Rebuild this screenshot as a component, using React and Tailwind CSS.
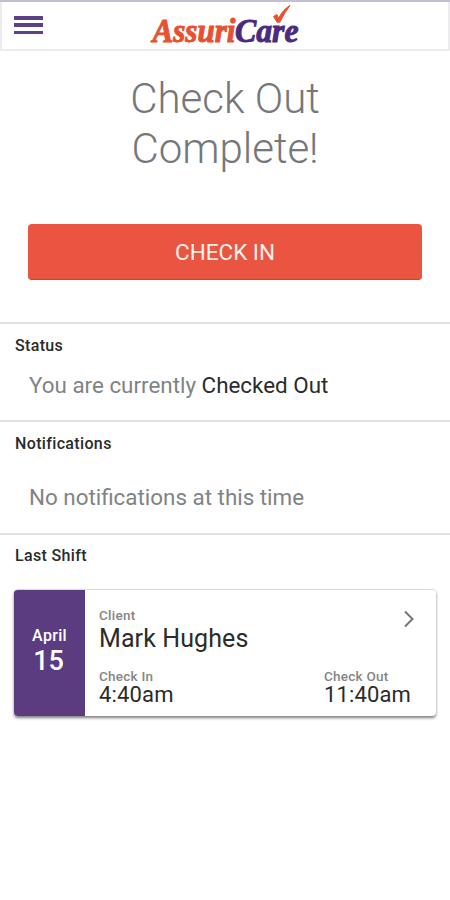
function Logo() {
  return (
    <svg className="-mt-px overflow-visible" width="152" height="50" viewBox="149 1 152 50" fontFamily="'Liberation Serif', serif" fontSize="33" fontWeight="700" fontStyle="italic" strokeWidth="1">
      <text x="152.5" y="41.5" textLength="83" lengthAdjust="spacingAndGlyphs" fill="#e8502f" stroke="#e8502f">Assuri</text>
      <text x="235" y="41.5" textLength="63.5" lengthAdjust="spacingAndGlyphs" fill="#4b2a80" stroke="#4b2a80">Care</text>
      <path d="M273.500 16.500 L276.700 14.500 L278.700 18 Q283 9.500 290 5.500 Q284.500 12.500 280 22 L277.200 22.500 Z" fill="#e8502f" stroke="#e8502f" strokeLinejoin="round" />
    </svg>
  );
}

function Header() {
  return (
    <header className="flex h-[52px] items-start border-t-2 border-[#c5bfd6]">
      <div className="flex h-[49px] w-full justify-between border-2 border-t-0 border-[#ececee] pr-3 pl-3">
        <button className="mt-[14px] flex h-[18px] w-[29px] flex-col justify-between" aria-label="Menu">
          <span className="h-[3.5px] w-full bg-[#5d4088]" />
          <span className="h-[3.5px] w-full bg-[#5d4088]" />
          <span className="h-[3.5px] w-full bg-[#5d4088]" />
        </button>
        <Logo />
        <span className="w-[29px]" />
      </div>
    </header>
  );
}

function Section({ title, className, children }) {
  return (
    <section className={`border-t-2 border-[#e1e1e1] px-[15px] ${className}`}>
      <h2 className="text-[16px] leading-5 font-medium tracking-[0.35px] text-[#2b2b2b]">{title}</h2>
      {children}
    </section>
  );
}

function ShiftCard({ month, day, client, checkIn, checkOut }) {
  return (
    <div className="mt-[23px] -ml-px flex h-[127px] w-[422px] overflow-hidden rounded-[4px] border-t border-[#dcdcdc] bg-white shadow-[0_2px_3px_rgba(0,0,0,0.5)]">
      <div className="flex w-[71px] flex-col items-center bg-[#5b3c80] pt-[36px] font-medium text-white">
        <span className="text-[16px] leading-5 tracking-[0.3px]">{month}</span>
        <span className="-ml-[2px] text-[27px] leading-[31px]">{day}</span>
      </div>
      <div className="flex-1 pt-[17px] pr-[25px] pl-[14px]">
        <div className="flex justify-between">
          <div>
            <p className="text-[13.5px] leading-4 font-medium tracking-[0.25px] text-[#858585]">Client</p>
            <p className="text-[25px] leading-8 tracking-[0.1px] text-[#2b2b2b]">{client}</p>
          </div>
          <svg className="-mr-[4px] mt-[3px]" width="12" height="18" viewBox="0 0 12 18" fill="none" stroke="#757575" strokeWidth="2">
            <path d="M2 1.500 L9.500 9 L2 16.500" />
          </svg>
        </div>
        <div className="mt-[13px] flex justify-between">
          <div>
            <p className="text-[13.5px] leading-4 font-medium tracking-[0.25px] text-[#858585]">Check In</p>
            <p className="text-[22px] leading-[22px] tracking-[0.15px] text-[#2b2b2b]">{checkIn}</p>
          </div>
          <div>
            <p className="text-[13.5px] leading-4 font-medium tracking-[0.25px] text-[#858585]">Check Out</p>
            <p className="text-[22px] leading-[22px] tracking-[0.15px] text-[#2b2b2b]">{checkOut}</p>
          </div>
        </div>
      </div>
    </div>
  );
}

export default function App() {
  return (
    <div className="min-h-[900px] w-full bg-white font-['Roboto',sans-serif]">
      <Header />
      <main>
        <h1 className="pt-[22px] text-center text-[42px] leading-[50px] font-light text-[#757779]">
          Check Out
          <br />
          Complete!
        </h1>
        <div className="px-[28px] pt-[50px] pb-[42px]">
          <button className="h-[56px] w-full rounded-[4px] border-b border-[#e03d1e] bg-[#ea5541] pt-[3px] text-[22.5px] text-[#fff0ea]">
            CHECK IN
          </button>
        </div>
        <Section title="Status" className="h-[98px] pt-3">
          <p className="mt-[15px] pl-[14px] text-[22.4px] leading-7 text-[#808386]">
            You are currently <span className="text-[#2b2b2b]">Checked Out</span>
          </p>
        </Section>
        <Section title="Notifications" className="h-[113px] pt-3">
          <p className="mt-[29px] pl-[14px] text-[22.4px] leading-7 text-[#808386]">No notifications at this time</p>
        </Section>
        <Section title="Last Shift" className="pt-[11px]">
          <ShiftCard month="April" day="15" client="Mark Hughes" checkIn="4:40am" checkOut="11:40am" />
        </Section>
      </main>
    </div>
  );
}
